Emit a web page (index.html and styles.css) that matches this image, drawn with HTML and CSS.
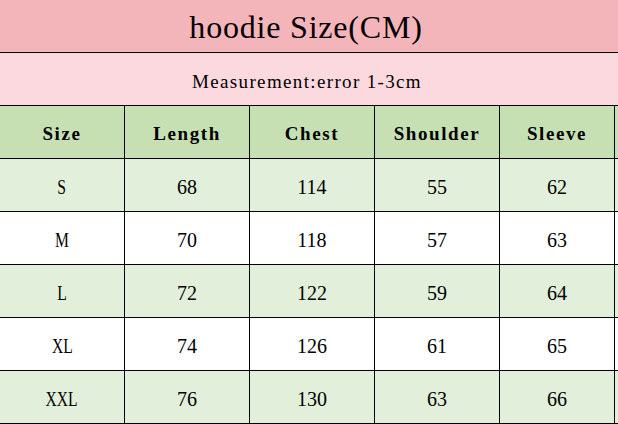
FILE: index.html
```html
<!DOCTYPE html>
<html>
<head>
<meta charset="utf-8">
<link rel="stylesheet" href="styles.css">
</head>
<body>
<div class="sheet">
  <div class="band title"><span class="t-text">hoodie Size(CM)</span></div>
  <div class="band sub"><span class="s-text">Measurement:error 1-3cm</span></div>

  <div class="cell head"><span class="h-text">Size</span></div>
  <div class="cell head"><span class="h-text">Length</span></div>
  <div class="cell head"><span class="h-text">Chest</span></div>
  <div class="cell head"><span class="h-text">Shoulder</span></div>
  <div class="cell head"><span class="h-text">Sleeve</span></div>
  <div class="cell head edge"></div>

  <div class="cell alt"><span class="size">S</span></div>
  <div class="cell alt">68</div>
  <div class="cell alt">114</div>
  <div class="cell alt">55</div>
  <div class="cell alt">62</div>
  <div class="cell alt edge"></div>

  <div class="cell"><span class="size">M</span></div>
  <div class="cell">70</div>
  <div class="cell">118</div>
  <div class="cell">57</div>
  <div class="cell">63</div>
  <div class="cell edge"></div>

  <div class="cell alt"><span class="size">L</span></div>
  <div class="cell alt">72</div>
  <div class="cell alt">122</div>
  <div class="cell alt">59</div>
  <div class="cell alt">64</div>
  <div class="cell alt edge"></div>

  <div class="cell"><span class="size">XL</span></div>
  <div class="cell">74</div>
  <div class="cell">126</div>
  <div class="cell">61</div>
  <div class="cell">65</div>
  <div class="cell edge"></div>

  <div class="cell alt"><span class="size">XXL</span></div>
  <div class="cell alt">76</div>
  <div class="cell alt">130</div>
  <div class="cell alt">63</div>
  <div class="cell alt">66</div>
  <div class="cell alt edge"></div>
</div>
</body>
</html>
```

FILE: styles.css
```css
html, body {
  margin: 0;
  padding: 0;
  background: #ffffff;
}

.sheet {
  width: 618px;
  height: 424px;
  display: grid;
  grid-template-columns: 124px 124px 124px 124px 114px 1fr;
  grid-template-rows: repeat(8, 52px);
  gap: 1px;
  background: #000000;
  padding-bottom: 1px;
  box-sizing: border-box;
  overflow: hidden;
  font-family: "Liberation Serif", serif;
  color: #000000;
}

.band {
  grid-column: 1 / -1;
  display: flex;
  align-items: center;
  justify-content: center;
  box-sizing: border-box;
}

.title {
  background: #f4b5ba;
  padding-top: 3px;
  padding-right: 6px;
}

.sub {
  background: #fcd9de;
  padding-top: 6px;
  padding-right: 4px;
}

.cell {
  background: #ffffff;
  display: flex;
  align-items: center;
  justify-content: center;
  font-size: 20px;
  padding-top: 5px;
  box-sizing: border-box;
}

.head {
  background: #c6e0b4;
  padding-top: 3px;
}

.alt {
  background: #e2efda;
}

.t-text,
.s-text,
.h-text {
  white-space: nowrap;
}

.t-text {
  font-size: 32px;
  letter-spacing: 0.8px;
}

.s-text {
  font-size: 19px;
  letter-spacing: 1.35px;
}

.h-text {
  font-size: 19px;
  font-weight: bold;
  letter-spacing: 1.6px;
}

.size {
  display: inline-block;
  transform: scaleX(0.78);
}
```
